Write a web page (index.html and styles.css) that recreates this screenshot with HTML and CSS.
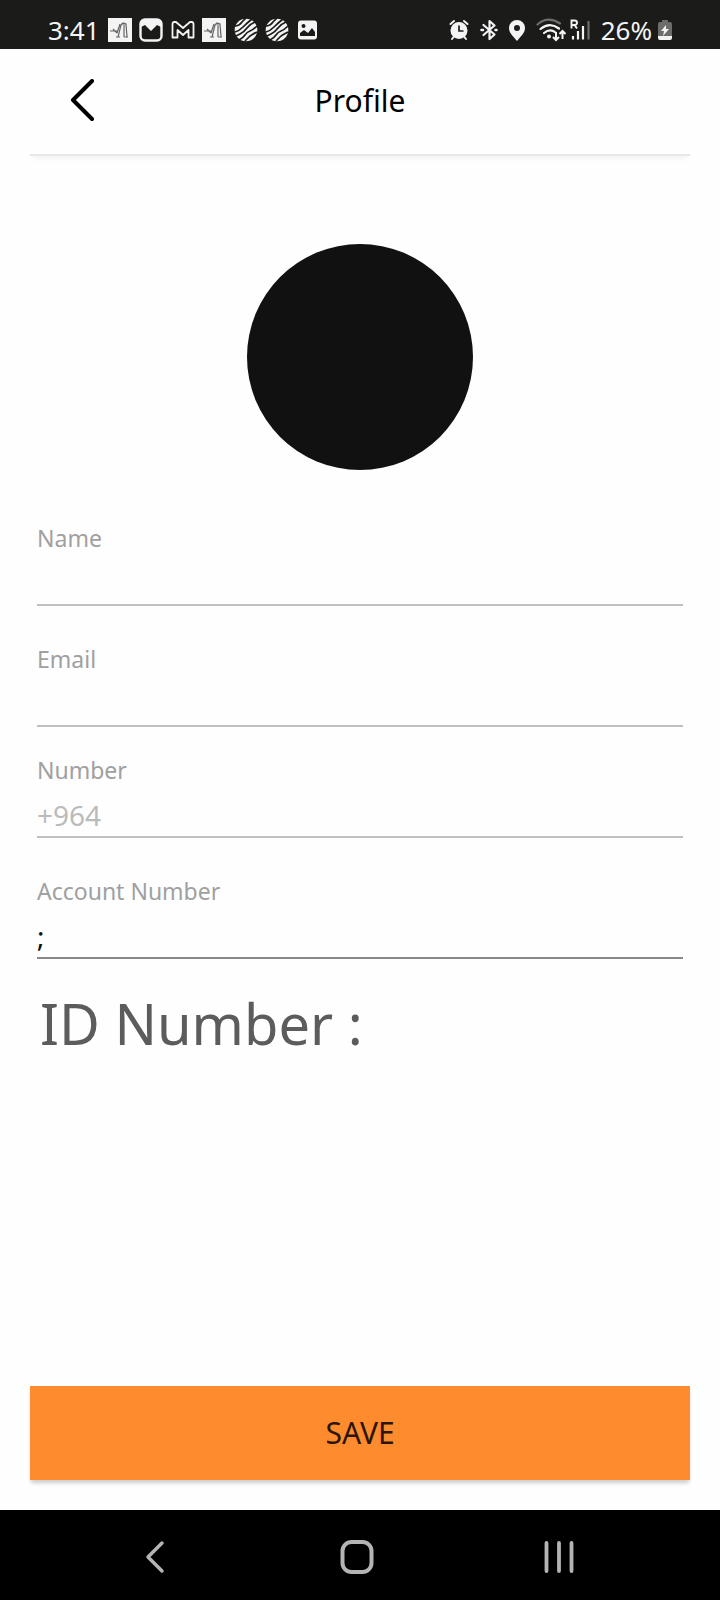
FILE: index.html
```
<!DOCTYPE html>
<html lang="en">
<head>
  <meta charset="utf-8">
  <meta name="viewport" content="width=device-width, initial-scale=1">
  <title>Profile</title>
  <link rel="stylesheet" href="styles.css">
</head>
<body>
  <div class="status-bar">
    <div class="status-left">
      <span class="clock">3:41</span>
      <svg width="24" height="24" viewBox="0 0 24 24">
        <path fill="#f4f4f4" d="M0 0h24v24H0z"/>
        <path fill="none" stroke="#666" stroke-width="1.2" d="M2 13h8M5 11l4 4M10 19l3-12 2-2 3 1 1 13M12 6l-3 9M16 7v12M8 19h4M16 19h4M13 6h5"/>
      </svg>
      <svg width="24" height="24" viewBox="0 0 24 24">
        <rect x="1.5" y="1.5" width="21" height="21" rx="4.5" fill="#1b1b19" stroke="#f4f4f4" stroke-width="2.4"/>
        <path fill="#f4f4f4" d="M2 9V4q0-3 3-3h14q3 0 3 3v5q-2-1-4-2l-6 6-6-6q-2 1-4 2z"/>
      </svg>
      <svg width="25" height="24" viewBox="0 0 25 24">
        <path fill="none" stroke="#f4f4f4" stroke-width="1.8" stroke-linejoin="round" d="M2.500 19.500V6q0-2 2-2h1.500l7 6 7-6h1.500q2 0 2 2v13.500h-5V12l-5.500 5-5.500-5v7.500z"/>
      </svg>
      <svg width="24" height="24" viewBox="0 0 24 24">
        <path fill="#f4f4f4" d="M0 0h24v24H0z"/>
        <path fill="none" stroke="#666" stroke-width="1.2" d="M2 13h8M5 11l4 4M10 19l3-12 2-2 3 1 1 13M12 6l-3 9M16 7v12M8 19h4M16 19h4M13 6h5"/>
      </svg>
      <svg width="25" height="24" viewBox="-1 0 25 24">
        <circle cx="12" cy="12" r="11.300" fill="#f4f4f4"/>
        <path fill="none" stroke="#1b1b19" stroke-width="1.700" d="M1 8q4 0 7-4l4-4M1 14q4-1 8-5t9-8M2 18l4-2M6 16q4-2 7-6t8-6M5 22q4-2 6-5t5-4 7-5M11 23q2-2 4-4t8-5"/>
      </svg>
      <svg width="24" height="24" viewBox="0 0 24 24">
        <circle cx="12" cy="12" r="11.300" fill="#f4f4f4"/>
        <path fill="none" stroke="#1b1b19" stroke-width="1.700" d="M1 8q4 0 7-4l4-4M1 14q4-1 8-5t9-8M2 18l4-2M6 16q4-2 7-6t8-6M5 22q4-2 6-5t5-4 7-5M11 23q2-2 4-4t8-5"/>
      </svg>
      <svg width="24" height="24" viewBox="0 0 24 24">
        <rect x="2" y="2.500" width="19" height="19" rx="3" fill="#f4f4f4"/>
        <circle cx="7.500" cy="8" r="2" fill="#1b1b19"/>
        <path fill="#1b1b19" d="M4 18v-3l4-3 4 3 4-5 3 4v4z"/>
      </svg>
    </div>
    <div class="status-right">
      <svg width="20" height="24" viewBox="0 0 20 24">
        <circle cx="10" cy="12.500" r="8.500" fill="#f4f4f4"/>
        <path fill="none" stroke="#f4f4f4" stroke-width="2" stroke-linecap="round" d="M1.500 6L5 3M18.500 6L15 3M5 18.500L3 21M15 18.500l2 2.500"/>
        <path fill="none" stroke="#1b1b19" stroke-width="1.700" d="M10 7.500V13h4.500"/>
      </svg>
      <svg width="18" height="24" viewBox="0 0 18 24">
        <path fill="none" stroke="#f4f4f4" stroke-width="2.200" stroke-linejoin="round" stroke-linecap="round" d="M3.500 7l11 9.500L9.500 21V3l5 4.500-11 9.500"/>
        <path stroke="#f4f4f4" stroke-width="2.500" stroke-linecap="round" d="M1.500 12h1.500M15.500 12h1"/>
      </svg>
      <svg width="16" height="24" viewBox="0 0 16 24">
        <path fill="#f4f4f4" fill-rule="evenodd" d="M8 2a8 8 0 0 1 8 8c0 5-4 8-8 13-4-5-8-8-8-13a8 8 0 0 1 8-8zm0 5a3 3 0 1 0 0 6 3 3 0 0 0 0-6z"/>
      </svg>
      <div class="signals">
        <svg width="30" height="24" viewBox="0 0 30 24">
          <g fill="none" stroke-width="2.200" stroke-linecap="round">
            <path stroke="#6d6d6b" d="M1.500 6.500Q12-2.500 24 5.500"/>
            <path stroke="#f4f4f4" d="M4.500 11q9-7.500 18.500-.5M8 15q6-5 11.500-.5"/>
          </g>
          <circle cx="13" cy="18.500" r="2" fill="#f4f4f4"/>
          <path fill="none" stroke="#f4f4f4" stroke-width="2" d="M20 14v8M17 19l3 3 3-3M26.500 21v-8M23.500 16l3-3 3 3"/>
        </svg>
        <svg width="20" height="24" viewBox="0 0 20 24">
          <path fill="none" stroke="#f4f4f4" stroke-width="1.900" d="M1.500 10.500v-8h3q2.500 0 2.500 2.200T4.500 7h-3M4.500 7L7 10.500"/>
          <path stroke="#f4f4f4" stroke-width="2.200" d="M3 18v3.500M8 13v8.500M13 8v13.500"/>
          <path stroke="#6d6d6b" stroke-width="2.200" d="M18.500 3v18.500"/>
        </svg>
      </div>
      <div class="battery">
        <span>26%</span>
        <svg width="14" height="24" viewBox="0 0 14 24">
          <path fill="#6d6d6b" d="M4 2h6v2h2q2 0 2 2v13H0V6q0-2 2-2h2z"/>
          <path fill="#f4f4f4" d="M0 18h14v2q0 2-2 2H2q-2 0-2-2zM8 7l-5 6h3l-1 5 6-7H8z"/>
        </svg>
      </div>
    </div>
  </div>

  <header class="header">
    <button type="button" class="back" aria-label="Back">
      <svg width="24" height="44" viewBox="0 0 24 44">
        <path fill="none" stroke="#000" stroke-width="4" stroke-linecap="round" stroke-linejoin="round" d="M22 2L3 21l19 19"/>
      </svg>
    </button>
    <h1>Profile</h1>
  </header>

  <form class="profile-form" id="profile-form">
    <div class="avatar"></div>

    <div class="field">
      <label for="name">Name</label>
      <input type="text" id="name">
    </div>
    <div class="field">
      <label for="email">Email</label>
      <input type="email" id="email">
    </div>
    <div class="field phone-field">
      <label for="number">Number</label>
      <input type="tel" id="number" placeholder="+964">
    </div>
    <div class="field account-field">
      <label for="account">Account Number</label>
      <input type="text" id="account" value=";">
    </div>

    <p class="id-number">ID Number :</p>

    <button type="submit" class="save">SAVE</button>
  </form>

  <nav class="nav-bar">
    <button type="button" aria-label="Back">
      <svg width="22" height="34" viewBox="0 0 22 34">
        <path fill="none" stroke="#b4b4b4" stroke-width="3.500" stroke-linecap="round" stroke-linejoin="round" d="M18 3L4 17l14 14"/>
      </svg>
    </button>
    <button type="button" aria-label="Home">
      <svg width="34" height="34" viewBox="0 0 34 34">
        <rect x="2.500" y="2" width="29" height="30" rx="9" fill="none" stroke="#b4b4b4" stroke-width="4"/>
      </svg>
    </button>
    <button type="button" aria-label="Recent apps">
      <svg width="30" height="34" viewBox="0 0 30 34">
        <path stroke="#b4b4b4" stroke-width="3.800" stroke-linecap="round" d="M2.500 3v28M15 3v28M27.500 3v28"/>
      </svg>
    </button>
  </nav>

  <script>
    document.getElementById('profile-form').addEventListener('submit', function(event) {
      event.preventDefault();
    });
  </script>
</body>
</html>
```

FILE: styles.css
```
* {
  box-sizing: border-box;
}

body {
  display: flex;
  flex-direction: column;
  min-height: 100vh;
  margin: 0;
  background-color: #fefefe;
  font-family: "Noto Sans", sans-serif;
}

svg {
  display: block;
}

button {
  border: none;
  padding: 0;
  background: none;
  font-family: inherit;
  cursor: pointer;
}

.status-bar {
  display: flex;
  justify-content: space-between;
  height: 49px;
  padding: 11px 48px 0;
  background-color: #1b1b19;
  color: #f4f4f4;
  font-size: 26px;
  line-height: 38px;
}

.status-left,
.status-right,
.signals,
.battery {
  display: flex;
  align-items: center;
}

.status-left {
  gap: 7px;
}

.clock {
  margin-right: 1px;
}

.status-right {
  gap: 11px;
}

.signals {
  gap: 4px;
}

.battery {
  gap: 6px;
}

.header {
  display: grid;
  grid-template-columns: 1fr auto 1fr;
  align-items: center;
  height: 107px;
  margin: 0 30px;
  padding: 0 40px 2px;
  border-bottom: 2px solid #e8e8e8;
  box-shadow: 0 6px 4px -3px #f4f4f4;
}

.back {
  justify-self: start;
}

h1 {
  margin: 0;
  font-size: 30px;
  font-weight: normal;
  line-height: 40px;
}

.profile-form {
  display: flex;
  flex: 1;
  flex-direction: column;
  padding: 88px 30px 30px;
}

.avatar {
  width: 226px;
  height: 226px;
  margin: 0 auto 52px;
  border-radius: 50%;
  background-color: #111;
}

.field {
  margin: 0 7px 37px;
}

label {
  display: block;
  color: #a0a0a0;
  font-size: 23px;
  line-height: 32px;
}

input {
  display: block;
  width: 100%;
  height: 52px;
  padding: 8px 0 0;
  border: none;
  border-bottom: 2px solid #c0c0c0;
  border-radius: 0;
  outline: none;
  background: none;
  color: #111;
  font-family: inherit;
  font-size: 28px;
}

input::placeholder {
  color: #bbb;
  opacity: 1;
}

.field:has(+ .phone-field) {
  margin-bottom: 27px;
}

.account-field {
  margin-bottom: 26px;
}

.account-field input {
  border-color: #888;
}

.id-number {
  margin: 0 10px;
  color: #5c5c5c;
  font-size: 56px;
  line-height: 76px;
}

.save {
  height: 94px;
  margin-top: auto;
  padding-bottom: 2px;
  background-color: #fe8c2e;
  box-shadow: 0 4px 4px -1px #ccc;
  color: #2c1508;
  font-size: 30px;
}

.nav-bar {
  display: grid;
  grid-template-columns: repeat(3, 1fr);
  height: 90px;
  padding: 3px 60px 0 54px;
  background-color: #000;
}

.nav-bar button {
  display: flex;
  align-items: center;
  justify-content: center;
}
```
